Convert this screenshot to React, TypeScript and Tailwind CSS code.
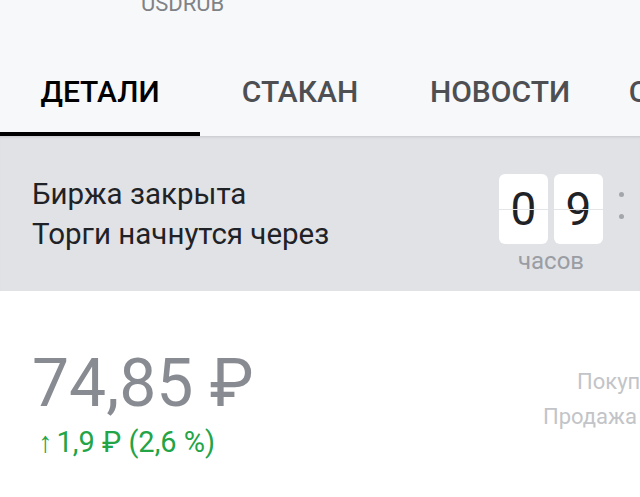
import React from "react";

export default function App() {
  const font = { fontFamily: "Roboto, 'Noto Sans', sans-serif" };
  return (
    <div className="w-[640px] h-[497px] overflow-hidden bg-white" style={font}>
      <div className="bg-[#f7f8fa] h-[136px] relative">
        <div className="h-[20px] relative overflow-hidden">
          <div className="absolute left-[141px] top-[-8px] text-[22px] leading-[24px] text-[#7f8287]">USDRUB</div>
        </div>
        <div className="flex h-[116px]">
          {[
            ["ДЕТАЛИ", true],
            ["СТАКАН", false],
            ["НОВОСТИ", false],
            ["СОБЫТИЯ", false],
          ].map(([t, a]) => (
            <div key={t as string} className="w-[200px] shrink-0 flex flex-col">
              <div className={`flex-1 flex items-center justify-center pt-[30px] text-[30px] font-medium ${a ? "text-black" : "text-[#4d4f53]"}`}>
                {t}
              </div>
              <div className={`h-[4px] ${a ? "bg-black" : ""}`} />
            </div>
          ))}
        </div>
      </div>
      <div className="bg-[#e0e2e6] h-[155px] flex items-start justify-between pl-[32px] shadow-[inset_0_3px_3px_-2px_rgba(0,0,0,0.12)]">
        <div className="pt-[38px] text-[#1f2226] text-[29.5px] leading-[40px]">
          <div>Биржа закрыта</div>
          <div>Торги начнутся через</div>
        </div>
        <div className="pt-[38px] flex items-start">
          <div className="flex flex-col items-center">
            <div className="flex gap-[6px]">
              {["0", "9"].map((d) => (
                <div key={d} className="relative w-[49px] h-[70px] bg-white rounded-[6px] flex items-center justify-center text-[46px] text-[#1f2226]">
                  {d}
                  <div className="absolute left-0 right-0 top-[35px] h-px bg-[#e3e5e8]" />
                </div>
              ))}
            </div>
            <div className="text-[24px] text-[#9a9da3] leading-[28px] mt-[3px]">часов</div>
          </div>
          <div className="w-[37px] flex flex-col items-center gap-[17px] pt-[18px]">
            <div className="w-[5px] h-[5px] rounded-full bg-[#a3a6ab]" />
            <div className="w-[5px] h-[5px] rounded-full bg-[#a3a6ab]" />
          </div>
        </div>
      </div>
      <div className="flex justify-between pl-[32px]">
        <div className="pt-[55px]">
          <div className="text-[66px] leading-[76px] text-[#888b91]">74,85 ₽</div>
          <div className="text-[29px] leading-[36px] text-[#22a447] pl-[6px] mt-[2px] flex items-baseline">
            <span className="mr-[4px]">↑</span>
            <span>1,9 ₽ (2,6 %)</span>
          </div>
        </div>
        <div className="pt-[73px] text-[22px] leading-[35px] text-[#c2c4c8] whitespace-nowrap w-[97px] shrink-0">
          <div className="pl-[34px]">Покупка</div>
          <div>Продажа</div>
        </div>
      </div>
    </div>
  );
}
